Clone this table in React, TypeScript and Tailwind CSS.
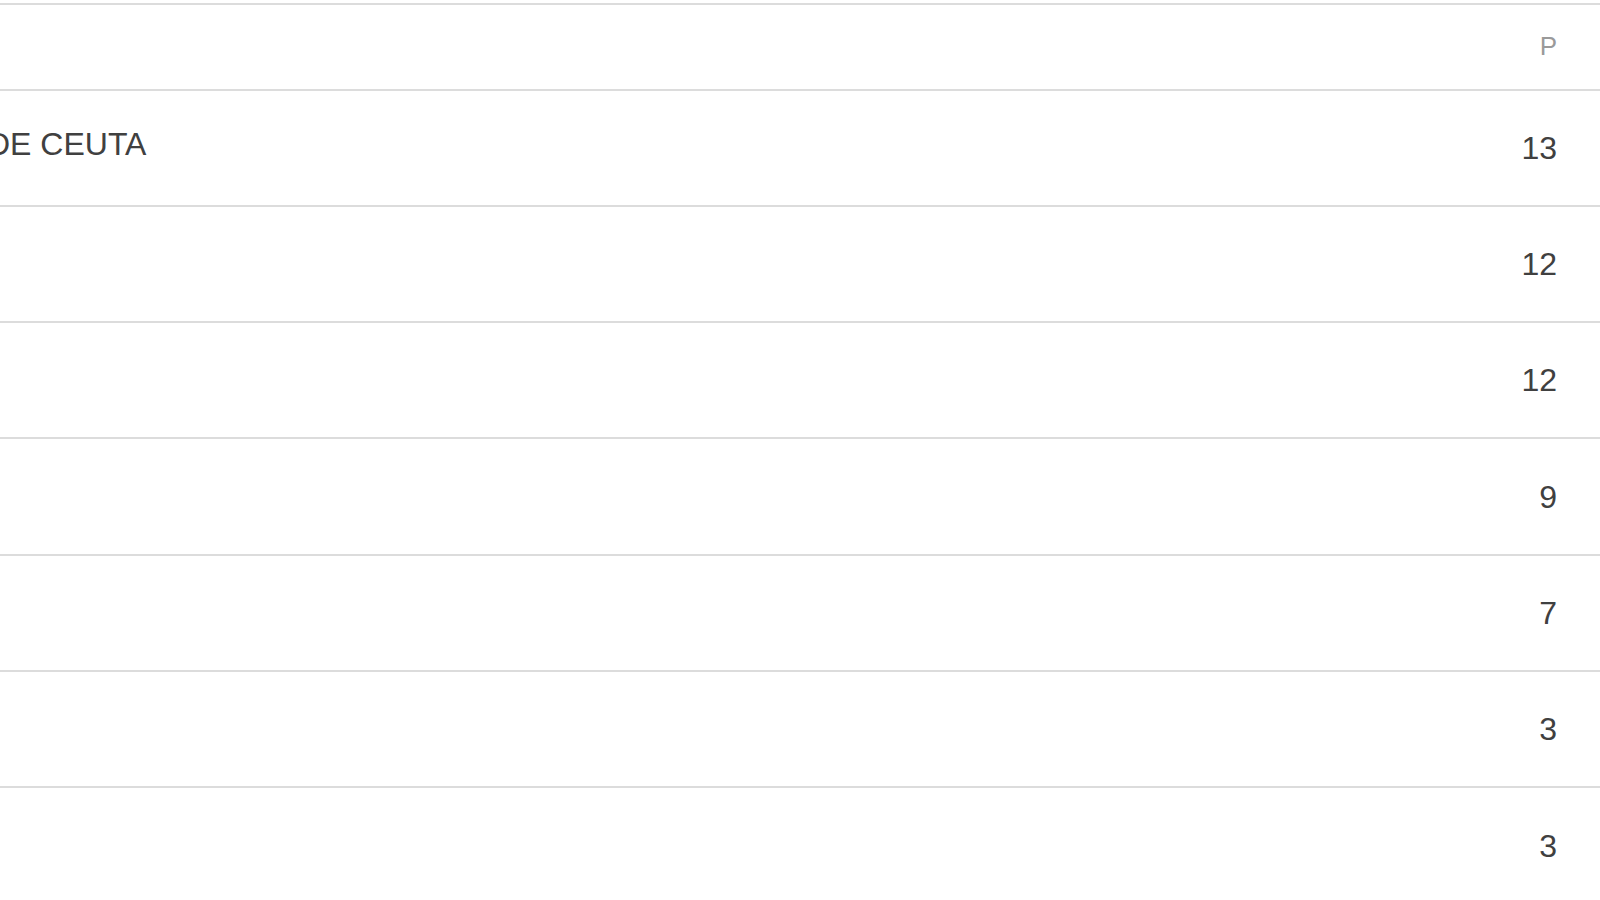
const rows = [
  { name: 'DE CEUTA', p: 13 },
  { name: '', p: 12 },
  { name: '', p: 12 },
  { name: '', p: 9 },
  { name: '', p: 7 },
  { name: '', p: 3 },
  { name: '', p: 3 },
];

export default function App() {
  return (
    <div className="w-[1600px] h-[900px] overflow-hidden bg-white pt-[3px] font-['Liberation_Sans',Arial,sans-serif]">
      <div className="flex items-center justify-end h-[87.5px] border-y-2 border-[#dcdcdc] pr-[43px] text-[26px] text-[#9a9a9a]">
        P
      </div>
      {rows.map((r, i) => (
        <div
          key={i}
          className="flex items-center justify-between h-[116.33px] border-b-2 border-[#dcdcdc] pr-[43px] text-[32px] text-[#404040]"
        >
          <span className="ml-[-13px] mb-[7px] whitespace-nowrap">{r.name}</span>
          <span>{r.p}</span>
        </div>
      ))}
    </div>
  );
}
